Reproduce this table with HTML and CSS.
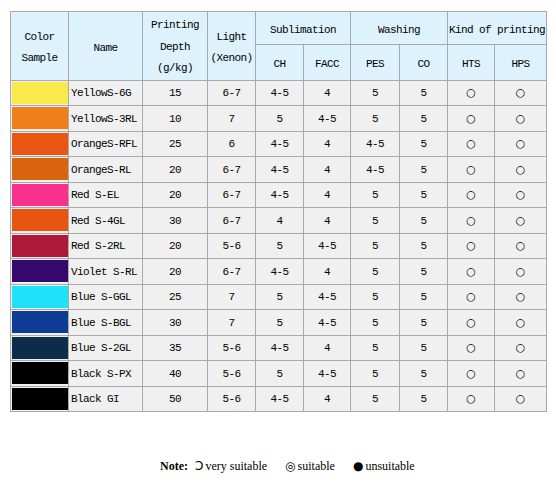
FILE: index.html
```html
<!DOCTYPE html>
<html>
<head>
<meta charset="utf-8">
<link rel="stylesheet" href="styles.css">
</head>
<body>
<div class="page">
<table class="chart">
<colgroup>
<col class="c-sample"><col class="c-name"><col class="c-depth"><col class="c-light">
<col class="c-ch"><col class="c-facc"><col class="c-pes"><col class="c-co"><col class="c-hts"><col class="c-hps">
</colgroup>
<thead>
<tr class="h1">
<th rowspan="2">Color<br>Sample</th>
<th rowspan="2">Name</th>
<th rowspan="2" class="depth">Printing<br>Depth<br>(g/kg)</th>
<th rowspan="2">Light<br>(Xenon)</th>
<th colspan="2">Sublimation</th>
<th colspan="2">Washing</th>
<th colspan="2" class="kind">Kind of printing</th>
</tr>
<tr class="h2">
<th>CH</th><th>FACC</th><th>PES</th><th>CO</th><th>HTS</th><th>HPS</th>
</tr>
</thead>
<tbody>
<tr><td class="sw"><div class="swatch yellow-6g"></div></td><td class="nm">YellowS-6G</td><td>15</td><td>6-7</td><td>4-5</td><td>4</td><td>5</td><td>5</td><td class="o">○</td><td class="o">○</td></tr>
<tr><td class="sw"><div class="swatch yellow-3rl"></div></td><td class="nm">YellowS-3RL</td><td>10</td><td>7</td><td>5</td><td>4-5</td><td>5</td><td>5</td><td class="o">○</td><td class="o">○</td></tr>
<tr><td class="sw"><div class="swatch orange-rfl"></div></td><td class="nm">OrangeS-RFL</td><td>25</td><td>6</td><td>4-5</td><td>4</td><td>4-5</td><td>5</td><td class="o">○</td><td class="o">○</td></tr>
<tr><td class="sw"><div class="swatch orange-rl"></div></td><td class="nm">OrangeS-RL</td><td>20</td><td>6-7</td><td>4-5</td><td>4</td><td>4-5</td><td>5</td><td class="o">○</td><td class="o">○</td></tr>
<tr><td class="sw"><div class="swatch red-el"></div></td><td class="nm">Red S-EL</td><td>20</td><td>6-7</td><td>4-5</td><td>4</td><td>5</td><td>5</td><td class="o">○</td><td class="o">○</td></tr>
<tr><td class="sw"><div class="swatch red-4gl"></div></td><td class="nm">Red S-4GL</td><td>30</td><td>6-7</td><td>4</td><td>4</td><td>5</td><td>5</td><td class="o">○</td><td class="o">○</td></tr>
<tr><td class="sw"><div class="swatch red-2rl"></div></td><td class="nm">Red S-2RL</td><td>20</td><td>5-6</td><td>5</td><td>4-5</td><td>5</td><td>5</td><td class="o">○</td><td class="o">○</td></tr>
<tr><td class="sw"><div class="swatch violet-rl"></div></td><td class="nm">Violet S-RL</td><td>20</td><td>6-7</td><td>4-5</td><td>4</td><td>5</td><td>5</td><td class="o">○</td><td class="o">○</td></tr>
<tr><td class="sw"><div class="swatch blue-ggl"></div></td><td class="nm">Blue S-GGL</td><td>25</td><td>7</td><td>5</td><td>4-5</td><td>5</td><td>5</td><td class="o">○</td><td class="o">○</td></tr>
<tr><td class="sw"><div class="swatch blue-bgl"></div></td><td class="nm">Blue S-BGL</td><td>30</td><td>7</td><td>5</td><td>4-5</td><td>5</td><td>5</td><td class="o">○</td><td class="o">○</td></tr>
<tr><td class="sw"><div class="swatch blue-2gl"></div></td><td class="nm">Blue S-2GL</td><td>35</td><td>5-6</td><td>4-5</td><td>4</td><td>5</td><td>5</td><td class="o">○</td><td class="o">○</td></tr>
<tr><td class="sw"><div class="swatch black"></div></td><td class="nm">Black S-PX</td><td>40</td><td>5-6</td><td>5</td><td>4-5</td><td>5</td><td>5</td><td class="o">○</td><td class="o">○</td></tr>
<tr><td class="sw"><div class="swatch black"></div></td><td class="nm">Black GI</td><td>50</td><td>5-6</td><td>4-5</td><td>4</td><td>5</td><td>5</td><td class="o">○</td><td class="o">○</td></tr>
</tbody>
</table>
<p class="note"><b>Note:</b><span class="item"><span class="sym">Ↄ</span>very suitable</span><span class="item"><span class="sym">◎</span>suitable</span><span class="item"><span class="sym">●</span>unsuitable</span></p>
</div>
</body>
</html>
```
FILE: styles.css
```css
html, body {
  margin: 0;
  padding: 0;
  background: #ffffff;
}
.page {
  padding: 11px 0 0 10px;
}
.chart {
  border-collapse: collapse;
  table-layout: fixed;
  width: 536px;
  font-family: "Liberation Mono", "DejaVu Sans Mono", monospace;
  font-size: 11px;
  letter-spacing: -0.6px;
  color: #000;
}
.c-sample { width: 58px; }
.c-name { width: 74px; }
.c-depth { width: 65px; }
.c-light { width: 48px; }
.c-ch { width: 48px; }
.c-facc { width: 47px; }
.c-pes { width: 49px; }
.c-co { width: 48px; }
.c-hts { width: 47px; }
.c-hps { width: 52px; }
.chart th, .chart td {
  border: 1px solid #a9a9a9;
  text-align: center;
  vertical-align: middle;
  padding: 0;
}
.chart th {
  background: #ddf2fc;
  font-weight: normal;
  line-height: 21.5px;
  padding-top: 5px;
}
.chart th.depth {
  padding-top: 3px;
}
.chart th.kind {
  white-space: nowrap;
  overflow: visible;
}
.h1 { height: 33px; }
.h2 { height: 35px; }
.chart tbody tr { height: 25.5px; }
.chart td {
  background: #f0f0f0;
  padding-top: 1px;
}
.chart td.nm {
  text-align: left;
  padding-left: 2px;
  white-space: nowrap;
}
.chart td.sw {
  padding: 1px 0 1px 1px;
  background: #f0f0f0;
}
.chart td.o {
  font-family: "DejaVu Sans", sans-serif;
  font-size: 11px;
  letter-spacing: 0;
  padding-top: 0;
}
.swatch {
  height: 22px;
  width: 100%;
}
.yellow-6g { background: #fbe84a; }
.yellow-3rl { background: #ef7f18; }
.orange-rfl { background: #e95512; }
.orange-rl { background: #d9640f; }
.red-el { background: #f8318f; }
.red-4gl { background: #e85510; }
.red-2rl { background: #ae1839; }
.violet-rl { background: #36096c; }
.blue-ggl { background: #1ee2f8; }
.blue-bgl { background: #0e3b96; }
.blue-2gl { background: #0b2d4a; }
.black { background: #000000; }
.note {
  margin: 46px 0 0 150px;
  display: flex;
  align-items: center;
  font-family: "Liberation Serif", serif;
  font-size: 12px;
  line-height: 16px;
  color: #000;
}
.note b {
  margin-right: 7px;
}
.item {
  margin-right: 12px;
}
.item + .item {
  margin-left: 6px;
}
.sym {
  font-family: "DejaVu Sans", sans-serif;
  font-size: 12px;
  margin-right: 2px;
}
```
